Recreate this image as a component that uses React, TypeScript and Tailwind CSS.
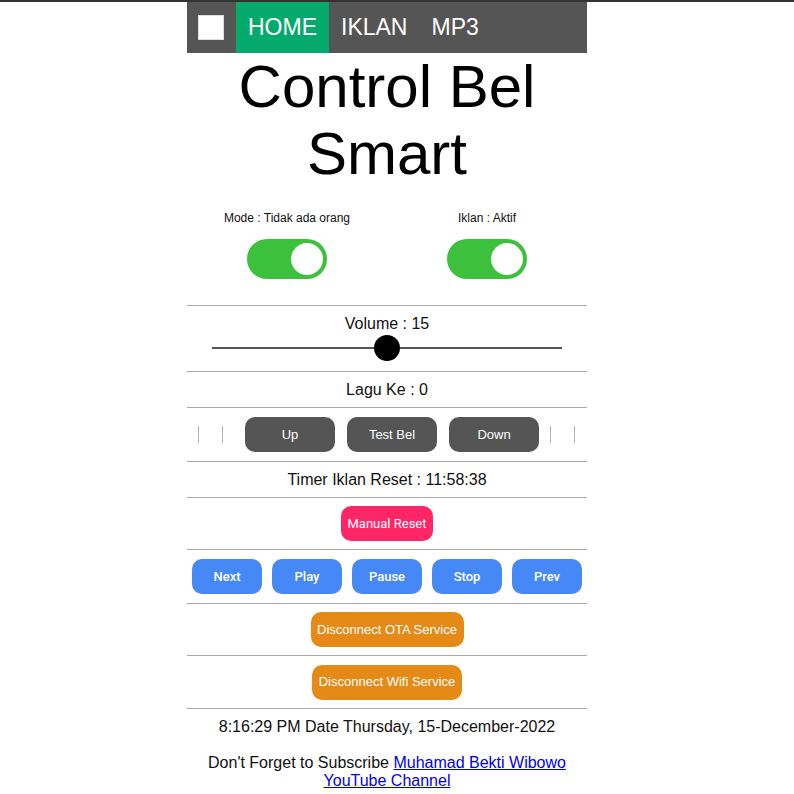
import React from 'react';

const Rule = () => <div className="h-px bg-[#a8a8a8]" />;

const Toggle = () => (
  <div className="flex h-[40px] w-[80px] items-center justify-end rounded-full bg-[#3bc13b] pr-[4px]">
    <div className="h-[32px] w-[32px] rounded-full bg-white" />
  </div>
);

const Bar = ({ className = '' }: { className?: string }) => (
  <span className={`inline-block h-[17px] w-px bg-[#b4b4b4] ${className}`} />
);

const media = ['Next', 'Play', 'Pause', 'Stop', 'Prev'];

export default function App() {
  return (
    <div className="min-h-[794px] border-t-2 border-[#333] bg-white font-['Liberation_Sans',Arial,sans-serif] text-[#111]">
      <div className="ml-[187px] w-[400px]">
        {/* nav */}
        <nav className="flex h-[51px] items-center bg-[#555] pl-[11px] text-[23px] text-white">
          <span className="mr-[12px] h-[25px] w-[26px] border border-[#ddd] bg-white" />
          <a className="flex h-full items-center bg-[#04aa6d] px-[12px]">HOME</a>
          <a className="flex h-full items-center px-[12px]">IKLAN</a>
          <a className="flex h-full items-center px-[12px]">MP3</a>
        </nav>

        <h1 className="text-center text-[60px] leading-[67px] text-black">
          Control Bel
          <br />
          Smart
        </h1>

        {/* toggles */}
        <div className="grid h-[118px] grid-cols-2 pt-[24px]">
          <div className="flex flex-col items-center">
            <span className="text-[12px] leading-[14px]">Mode : Tidak ada orang</span>
            <div className="mt-[14px]">
              <Toggle />
            </div>
          </div>
          <div className="flex flex-col items-center">
            <span className="text-[12px] leading-[14px]">Iklan : Aktif</span>
            <div className="mt-[14px]">
              <Toggle />
            </div>
          </div>
        </div>
        <Rule />

        {/* volume */}
        <div className="flex h-[65px] flex-col items-center pt-[9px]">
          <span className="text-[16px] leading-[18px]">Volume : 15</span>
          <div className="relative mt-[2px] flex h-[26px] w-[350px] items-center">
            <div className="h-[2px] w-full bg-[#555]" />
            <div className="absolute left-[162px] top-0 h-[26px] w-[26px] rounded-full bg-black" />
          </div>
        </div>
        <Rule />

        <div className="flex h-[35px] items-center justify-center text-[16px]">Lagu Ke : 0</div>
        <Rule />

        {/* up / test / down */}
        <div className="flex h-[53px] items-center pl-[11px] text-[13px] text-white">
          <Bar />
          <Bar className="ml-[23px]" />
          <button className="ml-[22px] h-[35px] w-[90px] rounded-[10px] bg-[#555]">Up</button>
          <button className="ml-[12px] h-[35px] w-[90px] rounded-[10px] bg-[#555]">Test Bel</button>
          <button className="ml-[12px] h-[35px] w-[90px] rounded-[10px] bg-[#555]">Down</button>
          <Bar className="ml-[11px]" />
          <Bar className="ml-[23px]" />
        </div>
        <Rule />

        <div className="flex h-[35px] items-center justify-center text-[16px]">Timer Iklan Reset : 11:58:38</div>
        <Rule />

        <div className="flex h-[51px] items-center justify-center">
          <button className="h-[35px] w-[92px] whitespace-nowrap rounded-[10px] bg-[#ff2667] font-['Roboto',sans-serif] text-[13px] text-white">
            Manual Reset
          </button>
        </div>
        <Rule />

        <div className="flex h-[53px] items-center justify-center gap-[10px]">
          {media.map((m) => (
            <button
              key={m}
              className="h-[35px] w-[70px] rounded-[10px] bg-[#4788f7] font-['Roboto',sans-serif] text-[13px] font-medium text-white"
            >
              {m}
            </button>
          ))}
        </div>
        <Rule />

        <div className="flex h-[51px] items-center justify-center">
          <button className="h-[35px] w-[153px] whitespace-nowrap rounded-[10px] bg-[#e68a17] text-[13px] text-white">
            Disconnect OTA Service
          </button>
        </div>
        <Rule />

        <div className="flex h-[52px] items-center justify-center">
          <button className="h-[35px] w-[150px] whitespace-nowrap rounded-[10px] bg-[#e68a17] text-[13px] text-white">
            Disconnect Wifi Service
          </button>
        </div>
        <Rule />

        <div className="pt-[9px] text-center text-[16px] leading-[18px]">
          <p>8:16:29 PM Date Thursday, 15-December-2022</p>
          <p className="mt-[18px] px-[20px]">
            Don't Forget to Subscribe{' '}
            <a className="text-[#0000ee] underline">Muhamad Bekti Wibowo YouTube Channel</a>
          </p>
        </div>
      </div>
    </div>
  );
}
